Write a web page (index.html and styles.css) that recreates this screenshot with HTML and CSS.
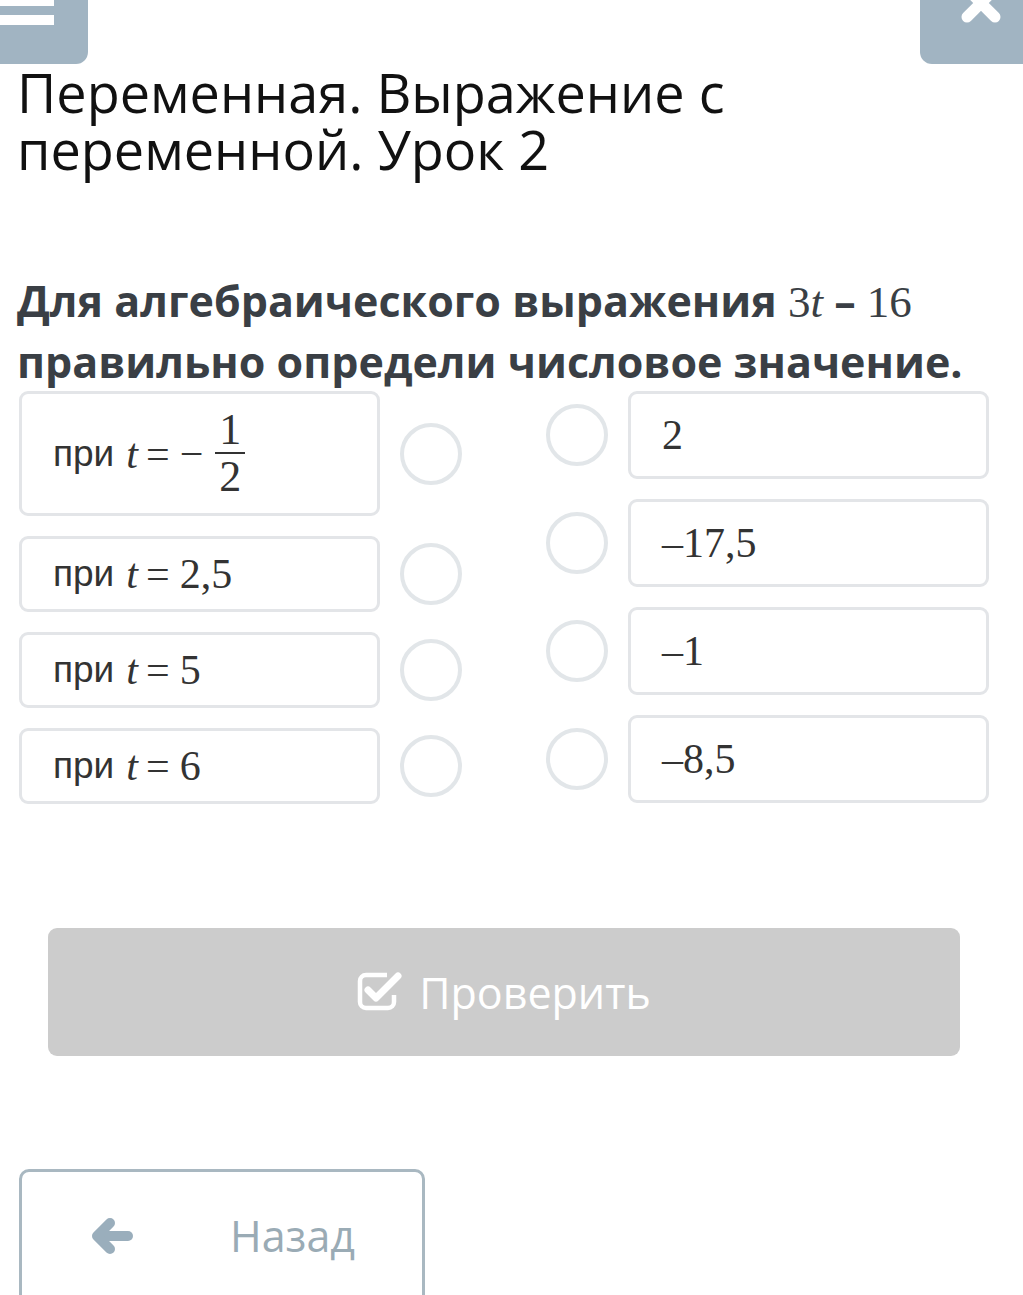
FILE: index.html
```html
<!DOCTYPE html>
<html lang="ru">
<head>
<meta charset="utf-8">
<link rel="stylesheet" href="styles.css">
</head>
<body>
<div class="topbar">
  <div class="tb-btn tb-left">
    <svg width="88" height="64" viewBox="0 0 88 64"><rect x="0" y="-4" width="54" height="10" fill="#fff"/><rect x="0" y="15" width="54" height="10" fill="#fff"/></svg>
  </div>
  <div class="tb-btn tb-right">
    <svg width="103" height="64" viewBox="0 0 103 64"><path d="M47 -11 L75 17 M75 -11 L47 17" stroke="#fff" stroke-width="11" stroke-linecap="round"/></svg>
  </div>
</div>

<h1 class="title">Переменная. Выражение с переменной. Урок 2</h1>

<p class="question">Для алгебраического выражения <span class="m">3<i>t</i></span> – <span class="m">16</span> правильно определи числовое значение.</p>

<div class="match">
  <div class="col">
    <div class="row">
      <div class="card card-tall"><span class="txt">при</span> <span class="m"><i>t</i><span class="op">=</span><span class="minus">−</span><span class="frac"><span class="num">1</span><span class="den">2</span></span></span></div>
      <div class="radio"></div>
    </div>
    <div class="row">
      <div class="card"><span class="txt">при</span> <span class="m"><i>t</i><span class="op">=</span>2,5</span></div>
      <div class="radio"></div>
    </div>
    <div class="row">
      <div class="card"><span class="txt">при</span> <span class="m"><i>t</i><span class="op">=</span>5</span></div>
      <div class="radio"></div>
    </div>
    <div class="row">
      <div class="card"><span class="txt">при</span> <span class="m"><i>t</i><span class="op">=</span>6</span></div>
      <div class="radio"></div>
    </div>
  </div>
  <div class="col col-right">
    <div class="row">
      <div class="radio"></div>
      <div class="card card-r"><span class="m">2</span></div>
    </div>
    <div class="row">
      <div class="radio"></div>
      <div class="card card-r"><span class="m">–17,5</span></div>
    </div>
    <div class="row">
      <div class="radio"></div>
      <div class="card card-r"><span class="m">–1</span></div>
    </div>
    <div class="row">
      <div class="radio"></div>
      <div class="card card-r"><span class="m">–8,5</span></div>
    </div>
  </div>
</div>

<div class="check-wrap">
  <button class="check">
    <svg width="48" height="42" viewBox="0 0 48 42"><path d="M30 6 H9 A6 6 0 0 0 3 12 V33 A6 6 0 0 0 9 39 H31 A6 6 0 0 0 37 33 V26" fill="none" stroke="#fff" stroke-width="4.5"/><path d="M11 21 L19 29 L41 7" fill="none" stroke="#fff" stroke-width="7" stroke-linecap="round" stroke-linejoin="round"/></svg>
    <span>Проверить</span>
  </button>
</div>

<div class="back-wrap">
  <button class="back">
    <span class="back-ico"><svg width="44" height="36" viewBox="0 0 44 36"><path d="M12 18 H38" stroke="#9aaebc" stroke-width="10" stroke-linecap="round"/><path d="M20 5 L7 18 L20 31" fill="none" stroke="#9aaebc" stroke-width="10" stroke-linecap="round" stroke-linejoin="round"/></svg></span>
    <span class="back-txt">Назад</span>
  </button>
</div>
</body>
</html>
```

FILE: styles.css
```css
html, body {
  margin: 0;
  padding: 0;
  background: #fff;
}
body {
  font-family: "Open Sans", "Noto Sans", sans-serif;
  width: 1023px;
  overflow: hidden;
}
.topbar {
  display: flex;
  justify-content: space-between;
  height: 64px;
}
.tb-btn {
  background: #a1b4c2;
  height: 64px;
}
.tb-btn svg { display: block; }
.tb-left {
  width: 88px;
  border-bottom-right-radius: 12px;
}
.tb-right {
  width: 103px;
  border-bottom-left-radius: 12px;
}
.title {
  margin: 0 0 0 17px;
  font-weight: 400;
  font-size: 54px;
  line-height: 57px;
  color: #111;
  width: 820px;
}
.question {
  margin: 93px 0 0 17px;
  font-weight: 700;
  font-size: 43px;
  line-height: 59px;
  color: #3a3f45;
  width: 990px;
}
.m {
  font-family: "Liberation Serif", "Times New Roman", serif;
  font-weight: 400;
  font-size: 42px;
}
.m i { font-style: italic; }
.question .m { font-size: 45px; }

.match {
  display: flex;
  gap: 84px;
  margin: 0 0 0 19px;
}
.col {
  display: flex;
  flex-direction: column;
  gap: 20px;
  width: 443px;
}
.row {
  display: flex;
  align-items: center;
  gap: 20px;
}
.card {
  box-sizing: border-box;
  width: 361px;
  height: 76px;
  border: 3px solid #e3e5e8;
  border-radius: 9px;
  padding-left: 31px;
  display: flex;
  align-items: center;
  color: #333;
}
.card-tall { height: 125px; }
.card-r { height: 88px; }
.txt {
  font-family: "Liberation Sans", Arial, sans-serif;
  font-size: 37px;
  margin-right: 12px;
  color: #333;
}
.card .m { display: inline-flex; align-items: center; }
.op { margin: 0 10px 0 8px; }
.minus { margin-right: 6px; }
.frac {
  display: inline-flex;
  flex-direction: column;
  align-items: center;
  margin-left: 6px;
  font-size: 44px;
}
.num {
  line-height: 44px;
  padding: 0 4px;
  border-bottom: 2px solid #333;
}
.den { line-height: 46px; }
.radio {
  box-sizing: border-box;
  width: 62px;
  height: 62px;
  border-radius: 50%;
  border: 4.5px solid #e2e6e9;
  flex: none;
}
.check-wrap {
  margin: 124px 0 0 48px;
}
.check {
  width: 912px;
  height: 128px;
  border: none;
  border-radius: 9px;
  background: #cccccc;
  display: flex;
  align-items: center;
  justify-content: center;
  gap: 14px;
  font-family: "Open Sans", sans-serif;
  font-size: 43px;
  color: #fff;
  padding: 0;
}
.check svg { margin-top: -4px; }
.back-wrap {
  margin: 113px 0 0 19px;
}
.back {
  box-sizing: border-box;
  width: 406px;
  height: 140px;
  border: 3px solid #a9b8c1;
  border-radius: 10px;
  background: #fff;
  display: flex;
  align-items: flex-start;
  padding: 44px 0 0 68px;
  font-family: "Open Sans", sans-serif;
  font-size: 43px;
  line-height: 40px;
  color: #9aabb5;
}
.back-ico { display: flex; margin-top: 2px; }
.back-txt { margin-left: 96px; }
```
